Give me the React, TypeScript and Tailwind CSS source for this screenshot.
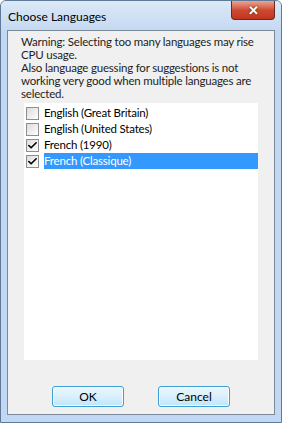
import { Check } from 'lucide-react';

const languages = [
    { name: 'English (Great Britain)', checked: false, selected: false },
    { name: 'English (United States)', checked: false, selected: false },
    { name: 'French (1990)', checked: true, selected: false },
    { name: 'French (Classique)', checked: true, selected: true },
];

function CheckBox({ checked }: { checked: boolean }) {
    return (
        <div className="w-[13px] h-[13px] border border-[#8e8f8f] bg-gradient-to-br from-[#dcdcdc] to-white flex items-center justify-center shrink-0">
            {checked && <Check size={11} strokeWidth={3.5} className="text-black" />}
        </div>
    );
}

function Button({ label }: { label: string }) {
    return (
        <button className="w-[72px] h-[21px] rounded-[3px] border border-[#3c9fd6] bg-gradient-to-b from-[#eaf6fd] via-[#d9f0fc] to-[#bee6fd] text-[12px] text-black leading-none shadow-[inset_0_0_0_1px_#ffffff]">
            {label}
        </button>
    );
}

export default function App() {
    return (
        <div className="w-[282px] h-[423px] bg-[#c2d8f2] border border-[#5f7a98] rounded-t-[6px] flex flex-col font-['Lato',sans-serif] overflow-hidden">
            <div className="h-[29px] flex items-start justify-between bg-gradient-to-b from-[#dbe8f7] to-[#c5daf2] shrink-0">
                <span className="pl-[7px] pt-[7px] text-[12px] text-black">Choose Languages</span>
                <div className="w-[44px] h-[19px] mr-[6px] rounded-b-[4px] border border-[#6b2a21] border-t-0 bg-gradient-to-b from-[#e8a493] via-[#cf4a32] to-[#c0351e] flex items-center justify-center">
                    <span className="text-white font-bold text-[13px] leading-none [text-shadow:0_0_2px_#3a1a14]">✕</span>
                </div>
            </div>
            <div className="flex-1 mx-[6px] mb-[7px] border border-[#7b8999] bg-[#f0f0f0] flex flex-col">
                <p className="ml-[13px] w-[248px] pt-[4px] text-[11.5px] tracking-[-0.2px] leading-[13px] text-[#1e1e1e]">
                    Warning: Selecting too many languages may rise CPU usage.
                    <br />
                    Also language guessing for suggestions is not working very good when multiple languages are selected.
                </p>
                <div className="mx-[16px] mt-[3px] h-[257px] bg-white flex flex-col pt-[2px]">
                    {languages.map(l => (
                        <div key={l.name} className="h-[16px] flex items-center pl-[2px]">
                            <CheckBox checked={l.checked} />
                            <span className={`ml-[5px] flex-1 h-[16px] flex items-center text-[11.5px] tracking-[-0.2px] ${l.selected ? 'bg-[#3399ff] text-white' : 'text-black'}`}>
                                {l.name}
                            </span>
                        </div>
                    ))}
                </div>
                <div className="flex gap-[34px] pl-[44px] mt-[26px]">
                    <Button label="OK" />
                    <Button label="Cancel" />
                </div>
            </div>
        </div>
    );
}
